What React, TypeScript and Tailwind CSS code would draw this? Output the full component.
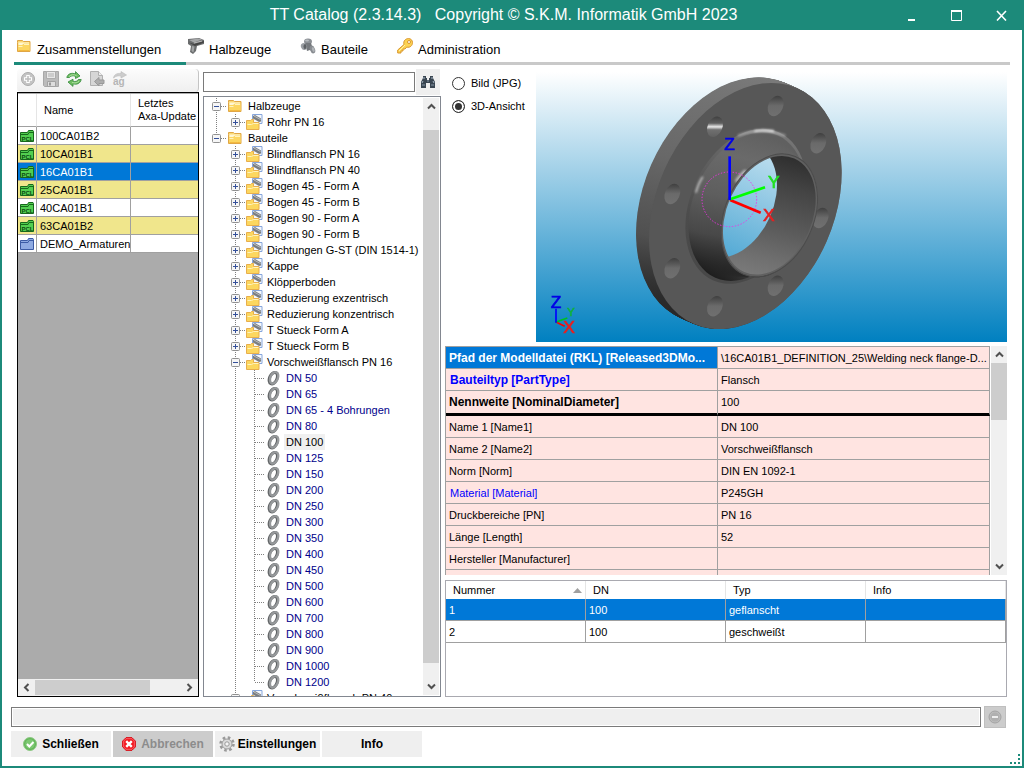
import { useState } from "react";
import type { ReactNode } from "react";

// ---------- icons ----------

function FolderIcon() {
  return (
    <svg width="16" height="14" viewBox="0 0 16 14" className="shrink-0">
      <path d="M1.500 3.500v-2h5l1 1h6.500v10h-12.500z" fill="#fbd974" stroke="#e0a645" />
      <path d="M2.500 3.500h10.500v3h-10.500z" fill="#fff6d2" />
      <path d="M2 6h4l2-1.500h5.500v7.500h-11.500z" fill="#fcd661" />
      <path d="M2.500 7.500h4M8 5.500h5" stroke="#fff3bd" />
      <path d="M2.500 11.500h11" stroke="#f3b93f" />
    </svg>
  );
}

function PipeIcon() {
  return (
    <svg width="16" height="16" viewBox="0 0 16 16" className="shrink-0">
      <path d="M0 1l11-1 5 2v4L9 8 8 13l-3 3-3-2 1-6-3-2z" fill="#6b6d6e" />
      <path d="M1 2l9-1.500 4 1-8 3z" fill="#a5a7a8" />
      <path d="M1 4.500l5 1.500L16 3v1.500L7 8z" fill="#444" />
      <path d="M6 5l8-2" stroke="#bbb" />
      <path d="M4 8l-.500 5 2 1.500 1-6z" fill="#a2a4a5" />
    </svg>
  );
}

function PartsIcon() {
  return (
    <svg width="16" height="16" viewBox="0 0 16 16" className="shrink-0">
      <ellipse cx="8" cy="3.500" rx="4" ry="3" fill="#8c9095" />
      <ellipse cx="7" cy="2.500" rx="2" ry="1" fill="#b8bcc0" />
      <path d="M5 5l6 0 2 6-6 2z" fill="#74787c" />
      <ellipse cx="4" cy="8.500" rx="3" ry="3.500" fill="#9a9ea3" transform="rotate(-25 4 8.500)" />
      <ellipse cx="5" cy="8.500" rx="1.500" ry="2.500" fill="#5c6064" />
      <ellipse cx="12.500" cy="11.500" rx="2.500" ry="4" fill="#888c91" transform="rotate(-20 12.500 11.500)" />
      <ellipse cx="13.300" cy="11.500" rx="1.200" ry="2.500" fill="#b0b4b8" transform="rotate(-20 13.300 11.500)" />
    </svg>
  );
}

function KeyIcon() {
  return (
    <svg width="16" height="16" viewBox="0 0 16 16" className="shrink-0">
      <path
        d="M7 6.500C6 3 8.500.600 11.500.600c2.500 0 4 1.800 4 4 0 3-2.500 5.400-5.800 4.500L8 11H6v2H4v2H.700v-3z"
        fill="#fcd352"
        stroke="#d9952c"
      />
      <circle cx="12" cy="4" r="1.500" fill="#fff" stroke="#d9952c" />
      <path d="M2 13l6-6" stroke="#fff0a8" />
    </svg>
  );
}

function AddIcon() {
  return (
    <svg width="16" height="16" viewBox="0 0 16 16">
      <circle cx="8" cy="8" r="6.500" fill="#c4c4c4" stroke="#aaa" />
      <path d="M8 4v8M4 8h8" stroke="#fff" strokeWidth="3.500" />
      <path d="M8 5v6M5 8h6" stroke="#bbb" strokeWidth="1.500" />
    </svg>
  );
}

function SaveIcon() {
  return (
    <svg width="16" height="16" viewBox="0 0 16 16">
      <path d="M.500.500h15v15h-14l-1-1z" fill="#bcbcbc" stroke="#a8a8a8" />
      <path d="M3.500.500h9v7h-9z" fill="#e8e8e8" stroke="#adadad" />
      <path d="M5 3h6M5 5h6" stroke="#b0b0b0" />
      <path d="M4.500 10.500h8v5h-8z" fill="#dedede" stroke="#a3a3a3" />
      <path d="M6 11.500h2v3H6z" fill="#999" />
    </svg>
  );
}

function RefreshIcon() {
  return (
    <svg width="16" height="16" viewBox="0 0 16 16">
      <path d="M.800 6.500C1.500 3 5.500 1.300 9.500 3V.600L14 5 9.500 7.500V5.300C7 4.300 4.500 4.800 3.500 6.500z" fill="#6fbd62" stroke="#32893a" strokeWidth=".8" />
      <path d="M15.200 8.500c-.700 4-4.700 5.500-8.200 4.300v2.600L2 11l5-2.800v2c2 .700 4.500.300 5.300-1.700z" fill="#6fbd62" stroke="#32893a" strokeWidth=".8" />
      <path d="M3 5.500c2-2 4.500-2.200 7.500-1M13 10c-1.500 2-4 2.300-7 1.500" fill="none" stroke="#aee0a0" />
    </svg>
  );
}

function ImportIcon() {
  return (
    <svg width="16" height="16" viewBox="0 0 16 16">
      <path d="M1.500.500h8l4 4v10h-12z" fill="#d6d6d6" stroke="#b0b0b0" />
      <path d="M9.500.500v4h4" fill="#eee" stroke="#b0b0b0" />
      <path d="M5.500 10.500l4.500-4v2.500h5v3.500h-5v2.500z" fill="#adadad" stroke="#999" />
    </svg>
  );
}

function RenameIcon() {
  return (
    <svg width="16" height="16" viewBox="0 0 16 16">
      <path d="M1.500 7C2 3.500 5 2 9 2.500V.500L14.500 4 9 7V5C6 4.500 4 5 1.500 7z" fill="#ccc" stroke="#bbb" strokeWidth=".6" />
      <text x="1" y="14" fontSize="10" fontWeight="bold" fill="#b5b5b5" fontFamily="Liberation Sans, sans-serif">ag</text>
    </svg>
  );
}

function BinocularsIcon() {
  return (
    <svg width="16" height="14" viewBox="0 0 16 14">
      <path d="M3 1h3v2h1v2h2V3h1V1h3v2l2 4v6H10V8H6v5H1V7l2-4z" fill="#3a4652" />
      <path d="M4 2v2M12 2v2M3 6l-1 2M13 6l1 2" stroke="#a8b6c4" />
      <path d="M2 10h3M11 10h3M7 6h2" stroke="#8797a6" />
    </svg>
  );
}

function ProjectIcon({ pcl }: { pcl: boolean }) {
  return (
    <svg width="14" height="12" viewBox="0 0 14 12" className="block">
      <path
        d="M.500 2.500h7l1-2h4.500l.500 1v10H.500z"
        fill={pcl ? "#52cf50" : "#8eaae2"}
        stroke={pcl ? "#17681c" : "#3b5ba5"}
      />
      <path d="M1 4.500h7l1-2h4" fill="none" stroke={pcl ? "#17681c" : "#3b5ba5"} />
      {pcl && (
        <text x="1.500" y="10.700" fontSize="6" fontWeight="bold" fill="#0c4a12" fontFamily="Liberation Sans, sans-serif">
          PCL
        </text>
      )}
    </svg>
  );
}

function GroupIcon() {
  return (
    <svg width="17" height="16" viewBox="0 0 17 16" className="shrink-0">
      <path d="M6.500.500h9.500v9H6.500z" fill="#f4f7fc" stroke="#86a6dc" />
      <path d="M7 2l2-1 6 3.500v3l-2 .500-6-3.500z" fill="#7b7e80" />
      <path d="M8 2l6.500 3.500" stroke="#b9bcbe" />
      <path d="M.500 6.500h4l1-1h2v3h5.500v7h-12.500z" fill="#fcd75f" stroke="#e8ae4c" />
      <path d="M1.500 10.500h4l2-1h5" fill="none" stroke="#fff3bd" />
    </svg>
  );
}

function RingIcon() {
  return (
    <svg width="16" height="16" viewBox="-2 0 16 16" className="shrink-0">
      <ellipse cx="6.300" cy="8.200" rx="3.700" ry="6" transform="rotate(24 6.300 8.200)" fill="none" stroke="#5f6264" strokeWidth="3" />
      <ellipse cx="7.100" cy="7.800" rx="3.700" ry="6" transform="rotate(24 7.100 7.800)" fill="none" stroke="#96999b" strokeWidth="2.400" />
    </svg>
  );
}

function OkIcon() {
  return (
    <svg width="14" height="14" viewBox="0 0 14 14">
      <circle cx="7" cy="7" r="6.500" fill="#62b558" stroke="#8fc985" />
      <circle cx="7" cy="7" r="4.800" fill="#7cc872" />
      <path d="M4 7l2.300 2.500L10.500 5" fill="none" stroke="#fff" strokeWidth="2" />
    </svg>
  );
}

function CancelIcon() {
  return (
    <svg width="14" height="14" viewBox="0 0 14 14">
      <path d="M4 .700h6L13.300 4v6L10 13.300H4L.700 10V4z" fill="#f3171f" stroke="#d8000c" />
      <path d="M4 1.700h6L12.300 4v6L10 12.300H4L1.700 10V4z" fill="none" stroke="#ff8086" strokeWidth=".7" />
      <path d="M4.200 4.200l5.600 5.600M9.800 4.200L4.200 9.800" stroke="#fff" strokeWidth="2.400" />
    </svg>
  );
}

function GearIcon() {
  return (
    <svg width="16" height="16" viewBox="0 0 16 16">
      <circle cx="8" cy="8" r="6.500" fill="none" stroke="#9a9a9a" strokeWidth="2.500" strokeDasharray="2.600 2.500" />
      <circle cx="8" cy="8" r="5" fill="#dcdcdc" stroke="#9a9a9a" />
      <circle cx="8" cy="8" r="2.200" fill="#f5f5f5" stroke="#9a9a9a" />
    </svg>
  );
}

function Chevron({ dir }: { dir: "up" | "down" | "left" | "right" }) {
  const paths = {
    up: "M1 6.500L4.500 3 8 6.500",
    down: "M1 2.500L4.500 6 8 2.500",
    left: "M6.500 1L3 4.500 6.500 8",
    right: "M2.500 1L6 4.500 2.500 8",
  };
  return (
    <svg width="9" height="9" viewBox="0 0 9 9">
      <path d={paths[dir]} fill="none" stroke="#505050" strokeWidth="2" />
    </svg>
  );
}

// ---------- data ----------

const projects = [
  { name: "100CA01B2", pcl: true },
  { name: "10CA01B1", pcl: true },
  { name: "16CA01B1", pcl: true },
  { name: "25CA01B1", pcl: true },
  { name: "40CA01B1", pcl: true },
  { name: "63CA01B2", pcl: true },
  { name: "DEMO_Armaturen", pcl: false },
];

const groups = [
  "Blindflansch PN 16",
  "Blindflansch PN 40",
  "Bogen 45 - Form A",
  "Bogen 45 - Form B",
  "Bogen 90 - Form A",
  "Bogen 90 - Form B",
  "Dichtungen G-ST (DIN 1514-1)",
  "Kappe",
  "Klöpperboden",
  "Reduzierung exzentrisch",
  "Reduzierung konzentrisch",
  "T Stueck Form A",
  "T Stueck Form B",
];

const sizes = [
  "DN 50", "DN 65", "DN 65 - 4 Bohrungen", "DN 80", "DN 100", "DN 125", "DN 150",
  "DN 200", "DN 250", "DN 300", "DN 350", "DN 400", "DN 450", "DN 500", "DN 600",
  "DN 700", "DN 800", "DN 900", "DN 1000", "DN 1200",
];

const properties = [
  { label: "Pfad der Modelldatei (RKL) [Released3DMo...", value: "\\16CA01B1_DEFINITION_25\\Welding neck flange-D...", look: "bg-[#0078d7] text-white font-bold text-[12px] pl-[3px]" },
  { label: "Bauteiltyp [PartType]", value: "Flansch", look: "text-[#0000ff] font-bold text-[12px] pl-[4px]" },
  { label: "Nennweite [NominalDiameter]", value: "100", look: "font-bold text-[12px] pl-[3px]", divider: true },
  { label: "Name 1 [Name1]", value: "DN 100" },
  { label: "Name 2 [Name2]", value: "Vorschweißflansch" },
  { label: "Norm [Norm]", value: "DIN EN 1092-1" },
  { label: "Material [Material]", value: "P245GH", look: "text-[#0000ff] pl-[4px]" },
  { label: "Druckbereiche [PN]", value: "PN 16" },
  { label: "Länge [Length]", value: "52" },
  { label: "Hersteller [Manufacturer]", value: "" },
  { label: "", value: "" },
];

const connections = [
  { nr: "1", dn: "100", typ: "geflanscht" },
  { nr: "2", dn: "100", typ: "geschweißt" },
];

// ---------- tree ----------

type Guide = "none" | "line" | "tee" | "end" | "plus" | "minus" | "minusEnd";

function GuideCell({ kind }: { kind: Guide }) {
  const box = kind === "plus" || kind === "minus" || kind === "minusEnd";
  const half = kind === "end" || kind === "minusEnd";
  return (
    <svg width="19" height="16" viewBox="0 0 19 16" className="shrink-0">
      {kind !== "none" && (
        <path d={half ? "M9.500 0v8" : "M9.500 0v16"} stroke="#808080" strokeDasharray="1 1" />
      )}
      {kind !== "none" && kind !== "line" && <path d="M10 8.500h9" stroke="#808080" strokeDasharray="1 1" />}
      {box && (
        <>
          <rect x="5.500" y="4.500" width="8" height="8" rx="1" fill="#f6f6f6" stroke="#919191" />
          <path d="M7 8.500h5" stroke="#34509a" />
          {kind === "plus" && <path d="M9.500 6v5" stroke="#34509a" />}
        </>
      )}
    </svg>
  );
}

function TreeRow({ guides, icon, label, leaf, active, onClick }: {
  guides: Guide[];
  icon: ReactNode;
  label: string;
  leaf?: boolean;
  active?: boolean;
  onClick?: () => void;
}) {
  return (
    <li className="flex h-4 items-center whitespace-nowrap" onClick={onClick}>
      {guides.map((g, i) => (
        <GuideCell key={i} kind={g} />
      ))}
      <span className="flex w-5 shrink-0 items-center pl-px">{icon}</span>
      <span
        className={`px-[2px] leading-4 ${leaf && !active ? "text-[#00008b]" : "text-black"} ${active ? "bg-[#f0f0f0]" : ""}`}
      >
        {label}
      </span>
    </li>
  );
}

function Tree() {
  const [active, setActive] = useState("DN 100");
  return (
    <ul className="min-w-0 flex-1 overflow-hidden pl-[3px] pt-px">
      <TreeRow guides={["minus"]} icon={<FolderIcon />} label="Halbzeuge" />
      <TreeRow guides={["line", "plus"]} icon={<GroupIcon />} label="Rohr PN 16" />
      <TreeRow guides={["minusEnd"]} icon={<FolderIcon />} label="Bauteile" />
      {groups.map((g) => (
        <TreeRow key={g} guides={["none", "plus"]} icon={<GroupIcon />} label={g} />
      ))}
      <TreeRow guides={["none", "minus"]} icon={<GroupIcon />} label="Vorschweißflansch PN 16" />
      {sizes.map((s, i) => (
        <TreeRow
          key={s}
          guides={["none", "line", i === sizes.length - 1 ? "end" : "tee"]}
          icon={<RingIcon />}
          label={s}
          leaf
          active={s === active}
          onClick={() => setActive(s)}
        />
      ))}
      <TreeRow guides={["none", "plus"]} icon={<GroupIcon />} label="Vorschweißflansch PN 40" />
    </ul>
  );
}

// ---------- 3D view ----------

const bolts = [
  [737, 114], [865, 226], [872, 450], [737, 653],
  [555, 715], [427, 601], [427, 378], [555, 176],
];

// a circle of the flange seen in the view direction
function Disc({ x, y, r, fill, stroke }: { x: number; y: number; r: number; fill: string; stroke?: string }) {
  return (
    <ellipse cx={x} cy={y} rx={r * 0.689} ry={r} transform={`rotate(23.8 ${x} ${y})`} fill={fill} stroke={stroke} strokeWidth="3" />
  );
}

function FlangeView() {
  const steps = Array.from({ length: 24 }, (_, i) => i / 23);
  return (
    <svg
      viewBox="18 12 1413 810"
      preserveAspectRatio="xMidYMid slice"
      className="h-full w-full"
      fontFamily="Liberation Sans, sans-serif"
      fontSize="52"
      textAnchor="middle"
    >
      <defs>
        <linearGradient id="sky" gradientUnits="userSpaceOnUse" x1="0" y1="12" x2="0" y2="822">
          <stop offset="0" stopColor="#ffffff" />
          <stop offset="1" stopColor="#0080c0" />
        </linearGradient>
        <linearGradient id="rim" gradientUnits="userSpaceOnUse" x1="600" y1="30" x2="430" y2="770">
          <stop offset="0" stopColor="#7a7a7a" />
          <stop offset="0.500" stopColor="#686868" />
          <stop offset="0.800" stopColor="#505050" />
          <stop offset="1" stopColor="#222222" />
        </linearGradient>
        <linearGradient id="fillet" gradientUnits="userSpaceOnUse" x1="640" y1="180" x2="620" y2="650">
          <stop offset="0" stopColor="#747474" />
          <stop offset="0.300" stopColor="#626262" />
          <stop offset="0.700" stopColor="#4c4c4c" />
          <stop offset="1" stopColor="#484848" />
        </linearGradient>
        <linearGradient id="neck" gradientUnits="userSpaceOnUse" x1="680" y1="200" x2="630" y2="650">
          <stop offset="0" stopColor="#606060" />
          <stop offset="0.250" stopColor="#6a6a6a" />
          <stop offset="0.550" stopColor="#5e5e5e" />
          <stop offset="0.800" stopColor="#484848" />
          <stop offset="0.950" stopColor="#262626" />
          <stop offset="1" stopColor="#1c1c1c" />
        </linearGradient>
        <linearGradient id="bore" gradientUnits="userSpaceOnUse" x1="790" y1="265" x2="690" y2="630">
          <stop offset="0" stopColor="#2e2e2e" />
          <stop offset="0.250" stopColor="#444444" />
          <stop offset="0.600" stopColor="#5c5c5c" />
          <stop offset="0.850" stopColor="#707070" />
          <stop offset="1" stopColor="#7a7a7a" />
        </linearGradient>
        <linearGradient id="bolt" x1="0.300" y1="0" x2="0.600" y2="1">
          <stop offset="0" stopColor="#3c3c3c" />
          <stop offset="0.500" stopColor="#6a6a6a" />
          <stop offset="1" stopColor="#707070" />
        </linearGradient>
        <linearGradient id="boltLit" x1="0.300" y1="0" x2="0.600" y2="1">
          <stop offset="0" stopColor="#3c3c3c" />
          <stop offset="0.350" stopColor="#606060" />
          <stop offset="0.520" stopColor="#e8e8e8" />
          <stop offset="0.660" stopColor="#707070" />
          <stop offset="1" stopColor="#606060" />
        </linearGradient>
        <filter id="soft" x="-50%" y="-50%" width="200%" height="200%">
          <feGaussianBlur stdDeviation="3" />
        </filter>
        <clipPath id="boreClip">
          <ellipse cx="718" cy="442" rx="128" ry="186" transform="rotate(23.8 718 442)" />
        </clipPath>
      </defs>

      {steps.map((t) => (
        <Disc key={t} x={607 + 39 * t} y={397 + 17 * t} r={386} fill="url(#rim)" />
      ))}
      <Disc x={646} y={414} r={386} fill="#575757" />
      {bolts.map(([x, y]) => (
        <Disc key={`${x}-${y}`} x={x} y={y} r={32} fill={x === 555 && y === 176 ? "url(#boltLit)" : "url(#bolt)"} />
      ))}

      <Disc x={648} y={415} r={243} fill="url(#fillet)" />
      {steps.map((t) => (
        <Disc key={t} x={650 + 68 * t} y={416 + 26 * t} r={233 - 39 * Math.sqrt(t)} fill="url(#neck)" />
      ))}
      <g fill="none" stroke="#ffffff" strokeLinecap="round" filter="url(#soft)">
        <path d="M625 202Q690 176 765 202" strokeWidth="5" opacity="0.500" />
        <path d="M675 189Q700 184 730 189" strokeWidth="5" />
        <path d="M498 372Q505 345 517 328" strokeWidth="5" opacity="0.700" />
        <path d="M620 338Q632 320 645 310" strokeWidth="10" opacity="0.550" />
      </g>

      <Disc x={718} y={442} r={193} fill="#606060" stroke="#4c4c4c" />
      <g clipPath="url(#boreClip)">
        <rect x="570" y="240" width="300" height="400" fill="url(#bore)" />
        <Disc x={607} y={397} r={179} fill="url(#sky)" />
      </g>

      <circle cx="598" cy="394" r="82" fill="none" stroke="#f032e6" strokeWidth="3" strokeDasharray="4 5" />
      <g strokeWidth="8">
        <path d="M600 396L692 434" stroke="#ff0000" />
        <path d="M600 394L705 358" stroke="#00ff00" />
        <path d="M599 265V396" stroke="#0000ff" />
      </g>
      <g strokeWidth="2">
        <text x="599" y="246" fill="#0000e6" stroke="#0000e6">Z</text>
        <text x="731" y="361" fill="#22e022" stroke="#22e022">Y</text>
        <text x="716" y="460" fill="#e62020" stroke="#e62020">X</text>
      </g>

      <g strokeWidth="5">
        <path d="M78 762L104 775" stroke="#ff0000" />
        <path d="M78 762L112 750" stroke="#00c020" />
        <path d="M78 722V764" stroke="#0000ff" />
      </g>
      <g strokeWidth="2">
        <text x="78" y="720" fill="#0000e6" stroke="#0000e6">Z</text>
        <text x="122" y="745" fontSize="34" fill="#10b040" stroke="#10b040">Y</text>
        <text x="117" y="795" fill="#e62020" stroke="#e62020">X</text>
      </g>
    </svg>
  );
}

// ---------- page ----------

const tabs = [
  { label: "Zusammenstellungen", icon: <FolderIcon />, width: "w-[172px]" },
  { label: "Halbzeuge", icon: <PipeIcon />, width: "w-[112px]" },
  { label: "Bauteile", icon: <PartsIcon />, width: "w-[97px]" },
  { label: "Administration", icon: <KeyIcon />, width: "flex-1" },
];

const tools = [
  { label: "Neu", icon: <AddIcon /> },
  { label: "Speichern", icon: <SaveIcon /> },
  { label: "Aktualisieren", icon: <RefreshIcon /> },
  { label: "Importieren", icon: <ImportIcon /> },
  { label: "Umbenennen", icon: <RenameIcon /> },
];

export default function App() {
  const [tab, setTab] = useState(0);
  const [project, setProject] = useState("16CA01B1");
  const [view, setView] = useState("3d");
  const [connection, setConnection] = useState("1");

  return (
    <div className="relative flex h-screen flex-col overflow-hidden border-2 border-t-0 border-[#1c8a7a] bg-white font-['Liberation_Sans',Arial,sans-serif] text-[11px] leading-4 text-black">
      <header className="-mr-[2px] flex h-[30px] shrink-0 items-center bg-[#1c8a7a] text-white">
        <h1 className="flex-1 whitespace-pre pl-[116px] text-center text-base">
          {"TT Catalog (2.3.14.3)   Copyright © S.K.M. Informatik GmbH 2023"}
        </h1>
        <button aria-label="Minimieren" className="flex h-full w-[45px] items-center justify-center">
          <svg width="11" height="11" viewBox="0 0 11 11"><path d="M2 10h7" stroke="#fff" strokeWidth="2" /></svg>
        </button>
        <button aria-label="Maximieren" className="flex h-full w-[45px] items-center justify-center">
          <svg width="11" height="11" viewBox="0 0 11 11"><path d="M.500 1h10v9.500H.500z" fill="none" stroke="#fff" /><path d="M0 1h11" stroke="#fff" strokeWidth="2" /></svg>
        </button>
        <button aria-label="Schließen" className="flex h-full w-[45px] items-center justify-center">
          <svg width="11" height="11" viewBox="0 0 11 11"><path d="M1 1l9 9.500M10 1l-9 9.500" stroke="#fff" strokeWidth="1.600" /></svg>
        </button>
      </header>

      <nav className="mx-3 flex shrink-0 text-[13px]">
        {tabs.map((t, i) => (
          <button
            key={t.label}
            onClick={() => setTab(i)}
            className={`flex h-[35px] items-center gap-[5px] border-b-3 pl-[2px] text-left ${t.width} ${
              tab === i ? "border-[#1c8a7a]" : "border-[#c9c9c9]"
            }`}
          >
            {t.icon}
            <span className="pt-2">{t.label}</span>
          </button>
        ))}
      </nav>

      <main className="flex min-h-0 flex-1 gap-1 px-[15px] pt-1">
        {/* project list */}
        <section className="flex w-[182px] shrink-0 flex-col">
          <div className="flex h-[23px] shrink-0 items-center gap-[7px] rounded-sm border-r border-[#c4c4c4] bg-linear-to-b from-[#fcfcfc] to-[#efefef] pb-[3px] pl-[3px]">
            {tools.map((t) => (
              <button key={t.label} aria-label={t.label}>{t.icon}</button>
            ))}
          </div>
          <div className="flex min-h-0 flex-1 flex-col border border-black bg-[#ababab] pt-px">
            <table className="w-full table-fixed border-separate border-spacing-0 bg-white">
              <thead>
                <tr className="h-[33px] text-left">
                  <th className="w-[19px] border-b border-r border-b-[#a0a0a0] border-r-[#e5e5e5] p-0" />
                  <th className="w-[94px] border-b border-r border-b-[#a0a0a0] border-r-[#e5e5e5] p-0 pl-[7px] font-normal">Name</th>
                  <th className="border-b border-[#a0a0a0] p-0 pl-[7px] font-normal leading-[13px]">Letztes<br />Axa-Update</th>
                </tr>
              </thead>
              <tbody>
                {projects.map((p, i) => (
                  <tr
                    key={p.name}
                    onClick={() => setProject(p.name)}
                    className={`h-[18px] ${
                      p.name === project ? "bg-[#0078d7] text-white" : i % 2 ? "bg-[#f0e68c]" : "bg-white"
                    }`}
                  >
                    <td className="border-b border-r border-[#a0a0a0] p-0 pl-[2px]"><ProjectIcon pcl={p.pcl} /></td>
                    <td className="overflow-hidden whitespace-nowrap border-b border-r border-[#a0a0a0] p-0 pl-[3px]">{p.name}</td>
                    <td className="border-b border-[#a0a0a0] p-0" />
                  </tr>
                ))}
              </tbody>
            </table>
            <div className="mt-auto flex h-[17px] items-center bg-[#f0f0f0]">
              <button aria-label="Nach links" className="flex w-[17px] justify-center"><Chevron dir="left" /></button>
              <div className="h-[15px] w-[115px] bg-[#cdcdcd]" />
              <button aria-label="Nach rechts" className="ml-auto flex w-[17px] justify-center"><Chevron dir="right" /></button>
            </div>
          </div>
        </section>

        {/* search and tree */}
        <section className="flex w-[238px] shrink-0 flex-col">
          <div className="flex h-[27px] shrink-0 items-start gap-px">
            <input aria-label="Suche" className="mt-[3px] h-5 w-[212px] border border-[#7a7a7a] bg-white px-1 outline-none" />
            <button aria-label="Suchen" className="flex h-[26px] w-6 items-center justify-center bg-[#efefef]">
              <BinocularsIcon />
            </button>
          </div>
          <div className="flex min-h-0 flex-1 border border-[#828790] pr-px">
            <Tree />
            <div className="my-px flex w-4 flex-col bg-[#f0f0f0]">
              <button aria-label="Nach oben" className="flex h-8 items-start justify-center pt-1"><Chevron dir="up" /></button>
              <div className="flex-1 bg-[#cdcdcd]" />
              <button aria-label="Nach unten" className="flex h-8 items-end justify-center pb-1"><Chevron dir="down" /></button>
            </div>
          </div>
        </section>

        {/* preview and properties */}
        <section className="flex min-w-0 flex-1 flex-col pt-[3px]">
          <div className="flex h-[270px] shrink-0">
            <div className="flex w-[91px] shrink-0 flex-col gap-[7px] pl-[7px] pt-[3px]">
              {[["jpg", "Bild (JPG)"], ["3d", "3D-Ansicht"]].map(([id, label]) => (
                <label key={id} className="flex items-center gap-[6px] whitespace-nowrap">
                  <input
                    type="radio"
                    name="view"
                    checked={view === id}
                    onChange={() => setView(id)}
                    className="h-[13px] w-[13px] shrink-0 appearance-none rounded-full border border-[#333333] bg-white checked:bg-[#333333] checked:shadow-[inset_0_0_0_2px_white]"
                  />
                  {label}
                </label>
              ))}
            </div>
            <div className="min-w-0 flex-1 bg-[linear-gradient(to_bottom,#ffffff,#0080c0)]">
              <FlangeView />
            </div>
          </div>

          <div className="mt-1 flex h-[229px] shrink-0">
            <div className="min-w-0 flex-1 overflow-hidden">
              <table className="w-full table-fixed border-separate border-spacing-0 border-l border-t border-[#a0a0a0] bg-[#ffe4e1]">
                <tbody>
                  {properties.map((p) => (
                    <tr key={p.label} className={p.divider ? "h-[25px]" : "h-[22px]"}>
                      <td
                        className={`w-1/2 overflow-hidden whitespace-nowrap border-r border-[#a0a0a0] py-0 pr-0 ${
                          p.divider ? "border-b-3 border-b-black" : "border-b"
                        } ${p.look ?? "pl-[3px]"}`}
                      >
                        {p.label}
                      </td>
                      <td
                        className={`overflow-hidden whitespace-nowrap border-r border-[#a0a0a0] py-0 pl-[3px] pr-0 ${
                          p.divider ? "border-b-3 border-b-black" : "border-b"
                        }`}
                      >
                        {p.value}
                      </td>
                    </tr>
                  ))}
                </tbody>
              </table>
            </div>
            <div className="ml-px flex w-4 flex-col bg-[#f0f0f0]">
              <button aria-label="Nach oben" className="flex h-[17px] items-center justify-center"><Chevron dir="up" /></button>
              <div className="h-[57px] bg-[#cdcdcd]" />
              <button aria-label="Nach unten" className="mt-auto flex h-[17px] items-center justify-center"><Chevron dir="down" /></button>
            </div>
          </div>

          <div className="mt-[5px] min-h-0 flex-1 border border-[#a9a9b0]">
            <table className="w-full table-fixed border-separate border-spacing-0">
              <thead>
                <tr className="h-[18px] text-left">
                  {["Nummer", "DN", "Typ", "Info"].map((h) => (
                    <th key={h} className="border-r border-[#e5e5e5] p-0 pl-[7px] font-normal">
                      <span className="flex items-center justify-between pr-[3px]">
                        {h}
                        {h === "Nummer" && (
                          <svg width="9" height="5" viewBox="0 0 9 5"><path d="M0 5L4.500 0 9 5z" fill="#a0a0a0" /></svg>
                        )}
                      </span>
                    </th>
                  ))}
                </tr>
              </thead>
              <tbody>
                {connections.map((c) => (
                  <tr
                    key={c.nr}
                    onClick={() => setConnection(c.nr)}
                    className={`h-[22px] ${c.nr === connection ? "bg-[#0078d7] text-white" : ""}`}
                  >
                    {[c.nr, c.dn, c.typ, ""].map((v, i) => (
                      <td key={i} className="border-b border-r border-[#a0a0a0] p-0 pl-[3px]">{v}</td>
                    ))}
                  </tr>
                ))}
              </tbody>
            </table>
          </div>
        </section>
      </main>

      <footer className="shrink-0 pb-[9px] pl-[9px] pr-4 pt-[9px]">
        <div className="flex items-center gap-[3px]">
          <div role="progressbar" aria-label="Fortschritt" className="h-5 flex-1 border border-[#7a7a7a] p-px">
            <div className="h-full bg-[#efefef]" />
          </div>
          <button aria-label="Stopp" disabled className="flex h-[22px] w-[22px] items-center justify-center border border-[#bfbfbf] bg-[#cccccc]">
            <svg width="14" height="14" viewBox="0 0 14 14">
              <circle cx="7" cy="7" r="6" fill="#bdbdbd" stroke="#a3a3a3" />
              <circle cx="7" cy="7" r="4.500" fill="#b0b0b0" />
              <path d="M4 7h6" stroke="#eee" strokeWidth="2" />
            </svg>
          </button>
        </div>
        <div className="mt-[3px] flex h-[26px] gap-[2px] text-[12px] font-bold">
          <button className="flex w-[100px] items-center justify-center gap-[5px] bg-[#efefef]"><OkIcon />Schließen</button>
          <button disabled className="flex w-[100px] items-center justify-center gap-[5px] bg-[#cccccc] text-[#8c8c8c]"><CancelIcon />Abbrechen</button>
          <button className="flex w-[105px] items-center justify-center gap-[3px] bg-[#efefef]"><GearIcon />Einstellungen</button>
          <button className="flex w-[100px] items-center justify-center bg-[#efefef]">Info</button>
        </div>
      </footer>

      {/* resize grip */}
      <svg width="10" height="10" viewBox="0 0 10 10" className="absolute bottom-[2px] right-[2px]">
        <path d="M8 0h2v2H8zM8 4h2v2H8zM8 8h2v2H8zM4 8h2v2H4zM0 8h2v2H0z" fill="#1c8a7a" />
      </svg>
    </div>
  );
}
